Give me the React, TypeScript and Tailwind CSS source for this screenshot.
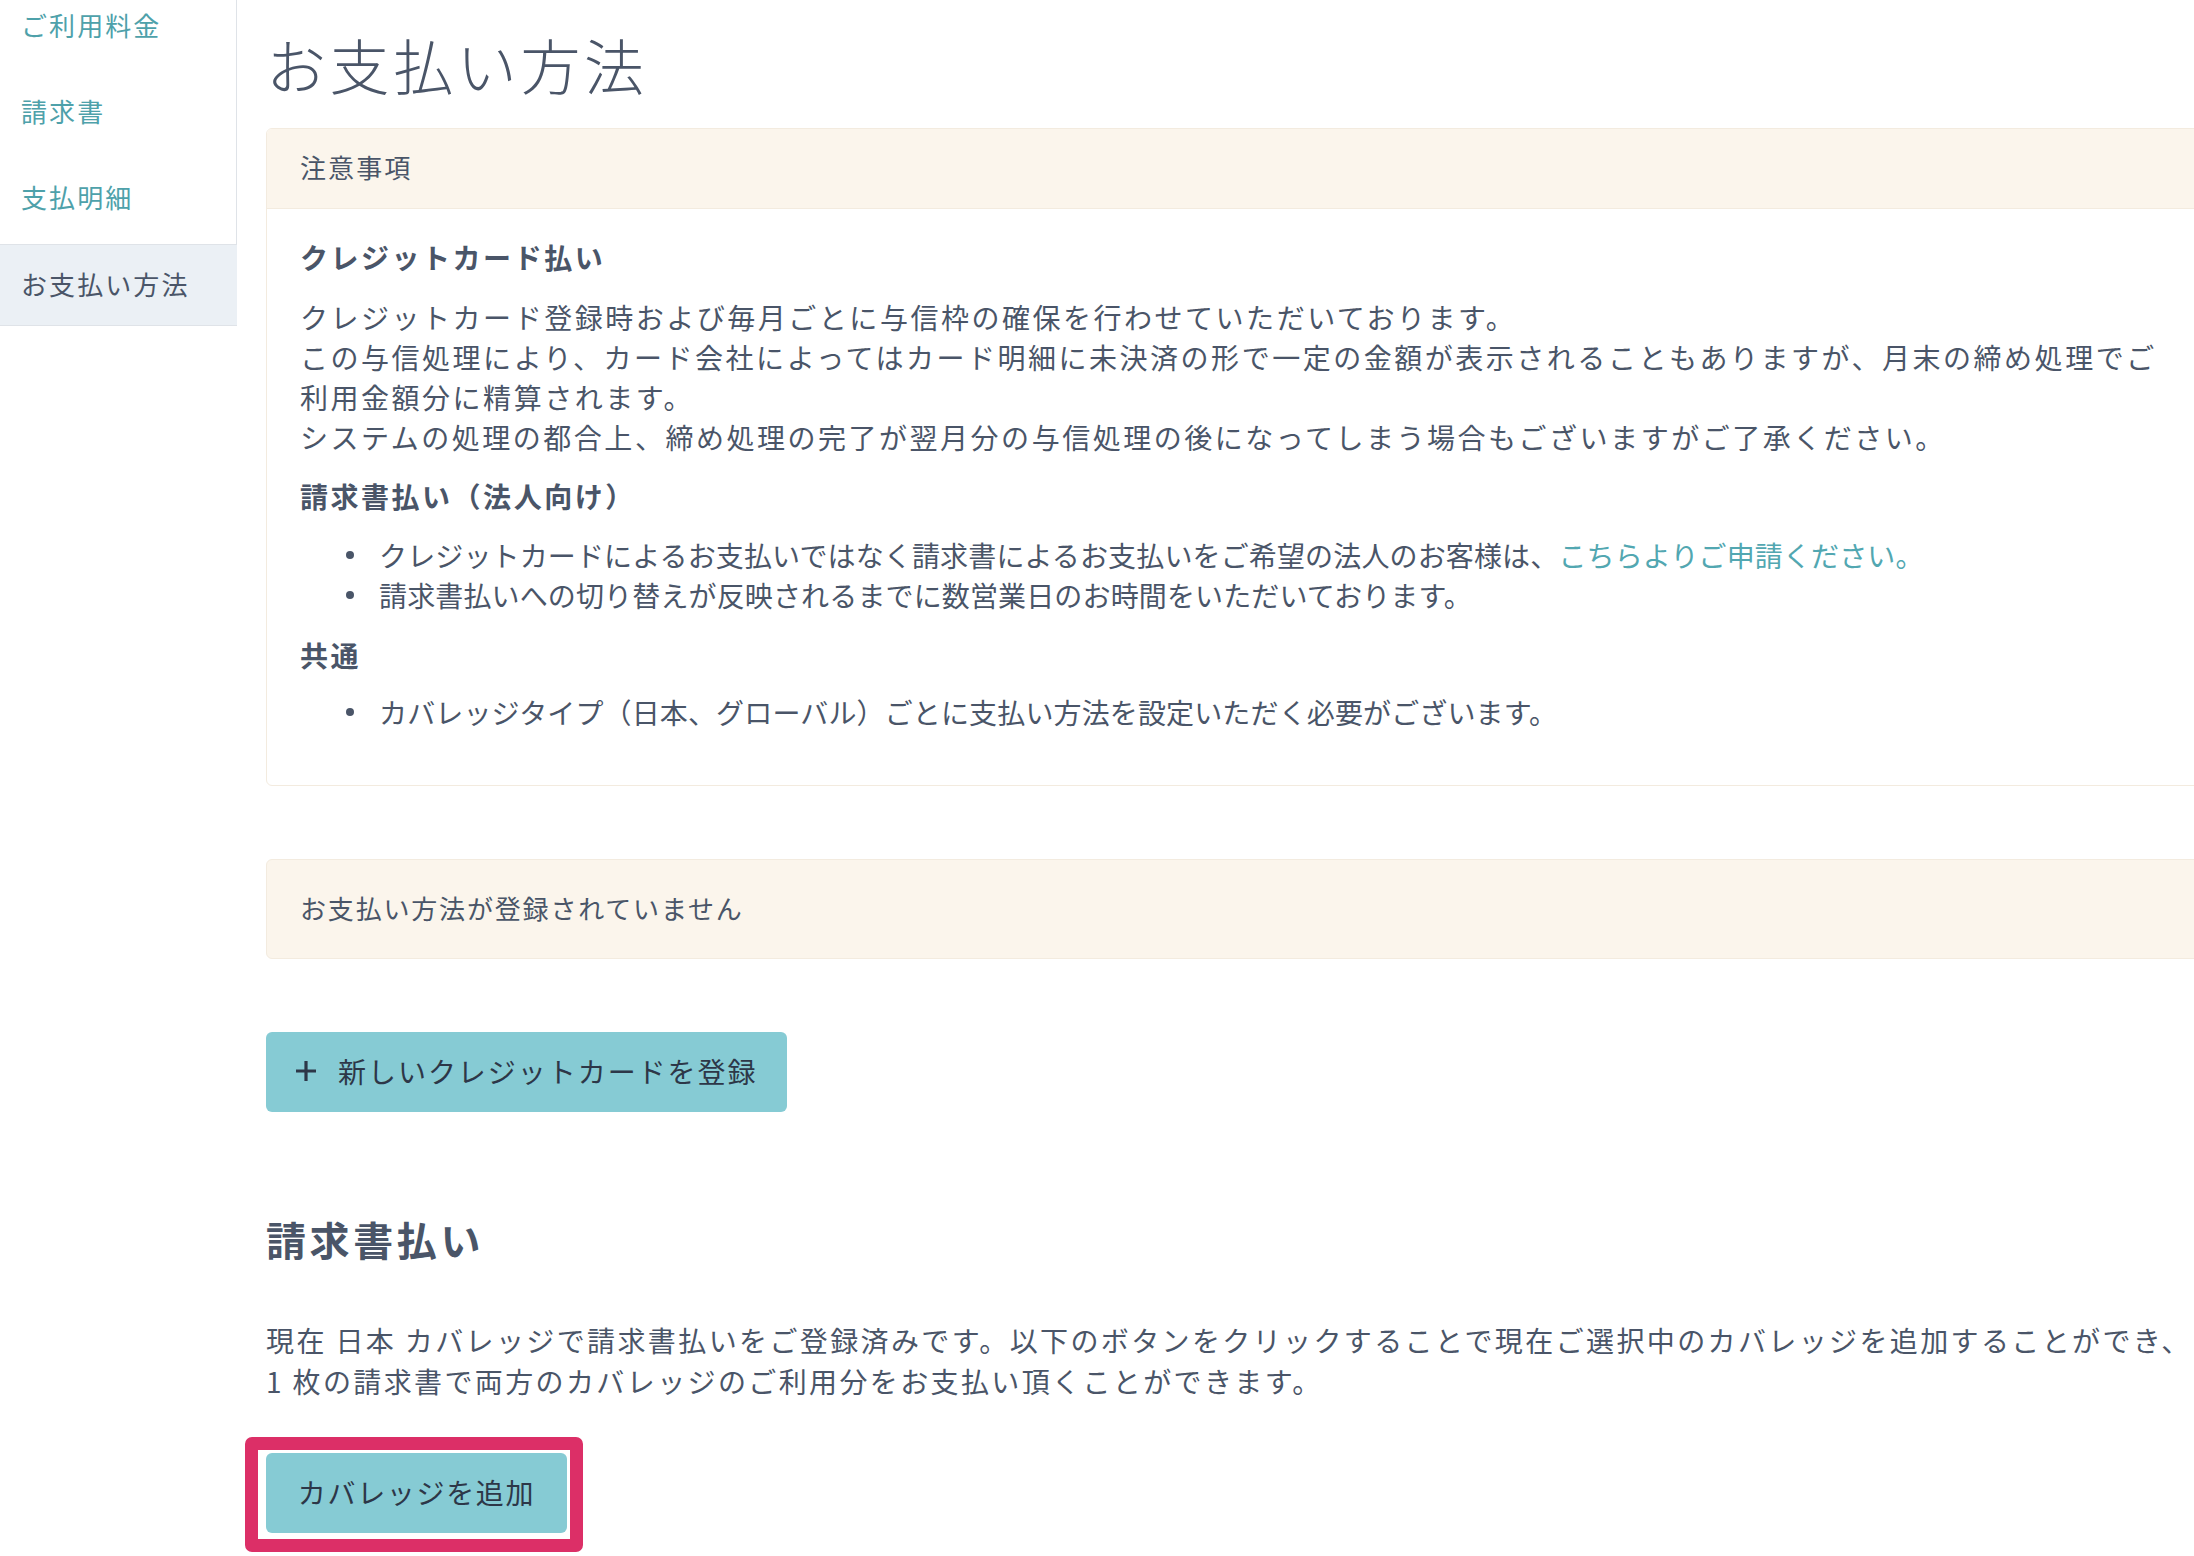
import React from "react";

const FONT = { fontFamily: '"Noto Sans CJK JP", "Noto Sans", sans-serif' };

function Bullet({ children }: { children: React.ReactNode }) {
  return (
    <div className="flex items-center h-[40px] pl-[46px] tracking-[0.005em]">
      <span className="w-[8px] h-[8px] rounded-full bg-[#4a5568] shrink-0" />
      <span className="ml-[25px] whitespace-nowrap">{children}</span>
    </div>
  );
}

export default function App() {
  return (
    <div
      className="flex w-[2194px] h-[1556px] overflow-hidden bg-white text-[#4a5568]"
      style={FONT}
    >
      {/* Sidebar */}
      <aside className="w-[237px] shrink-0 flex flex-col mt-[-19px]">
        <a className="h-[86px] flex items-center px-[21px] border-r border-[#dfe3e8] text-[26px] tracking-[0.08em] text-[#4ea1aa]">
          ご利用料金
        </a>
        <a className="h-[86px] flex items-center px-[21px] border-r border-[#dfe3e8] text-[26px] tracking-[0.08em] text-[#4ea1aa]">
          請求書
        </a>
        <a className="h-[91px] flex items-center px-[21px] pb-[5px] border-r border-[#dfe3e8] text-[26px] tracking-[0.08em] text-[#4ea1aa]">
          支払明細
        </a>
        <a className="h-[82px] flex items-center px-[21px] pb-[3px] border-y border-[#dfe3e8] bg-[#ebf0f5] text-[26px] tracking-[0.08em] text-[#4a5568]">
          お支払い方法
        </a>
      </aside>

      {/* Main */}
      <main className="w-[1980px] shrink-0 pl-[29px] flex flex-col">
        <h1 className="h-[128px] flex items-center text-[60px] font-light tracking-[0.06em] text-[#4a5568] leading-none">
          お支払い方法
        </h1>

        {/* Notes card */}
        <section className="border border-[#f3ebdf] rounded-[6px] overflow-hidden">
          <div className="h-[80px] flex items-center px-[33px] pb-[4px] bg-[#fbf5ec] border-b border-[#f3ebdf] text-[26px] tracking-[0.08em]">
            注意事項
          </div>
          <div className="px-[33px] pt-[28px] pb-[53px] text-[28px] tracking-[0.09em] leading-[40px]">
            <h3 className="font-bold">クレジットカード払い</h3>
            <div className="mt-[20px]">
              <div className="whitespace-nowrap">
                クレジットカード登録時および毎月ごとに与信枠の確保を行わせていただいております。
              </div>
              <div className="whitespace-nowrap">
                この与信処理により、カード会社によってはカード明細に未決済の形で一定の金額が表示されることもありますが、月末の締め処理でご
              </div>
              <div className="whitespace-nowrap">利用金額分に精算されます。</div>
              <div className="whitespace-nowrap">
                システムの処理の都合上、締め処理の完了が翌月分の与信処理の後になってしまう場合もございますがご了承ください。
              </div>
            </div>

            <h3 className="font-bold mt-[19px]">請求書払い（法人向け）</h3>
            <div className="mt-[19px]">
              <Bullet>
                クレジットカードによるお支払いではなく請求書によるお支払いをご希望の法人のお客様は、
                <a className="text-[#52a7b1]">こちらよりご申請ください。</a>
              </Bullet>
              <Bullet>
                請求書払いへの切り替えが反映されるまでに数営業日のお時間をいただいております。
              </Bullet>
            </div>

            <h3 className="font-bold mt-[20px]">共通</h3>
            <div className="mt-[17px]">
              <Bullet>
                カバレッジタイプ（日本、グローバル）ごとに支払い方法を設定いただく必要がございます。
              </Bullet>
            </div>
          </div>
        </section>

        {/* Empty notice */}
        <section className="mt-[73px] h-[100px] flex items-center px-[33px] pb-[4px] bg-[#fbf5ec] border border-[#f3ebdf] rounded-[6px] text-[26px] tracking-[0.07em]">
          お支払い方法が登録されていません
        </section>

        {/* New card button */}
        <div className="mt-[73px]">
          <button className="h-[80px] w-[521px] flex items-center pl-[29px] pb-[2px] bg-[#86cbd4] rounded-[6px] text-[#2d3748] text-[28px] tracking-[0.07em]">
            <svg width="22" height="22" viewBox="0 0 22 22" className="shrink-0">
              <path d="M11 1v20M1 11h20" stroke="#2d3748" strokeWidth="3.2" />
            </svg>
            <span className="ml-[21px]">新しいクレジットカードを登録</span>
          </button>
        </div>

        {/* Invoice payment */}
        <h2 className="mt-[99px] h-[56px] flex items-center text-[40px] font-bold tracking-[0.09em] text-[#4a5568]">
          請求書払い
        </h2>
        <div className="mt-[53px] text-[28px] tracking-[0.085em] leading-[41px]">
          <div className="whitespace-nowrap">
            現在 日本 カバレッジで請求書払いをご登録済みです。以下のボタンをクリックすることで現在ご選択中のカバレッジを追加することができ、
          </div>
          <div className="whitespace-nowrap">
            1 枚の請求書で両方のカバレッジのご利用分をお支払い頂くことができます。
          </div>
        </div>

        <div className="mt-[51px]">
          <div className="relative inline-block">
            <button className="h-[80px] w-[301px] flex items-center justify-center pb-[2px] bg-[#86cbd4] rounded-[6px] text-[#2d3748] text-[28px] tracking-[0.06em]">
              カバレッジを追加
            </button>
            <div className="absolute left-[-21px] top-[-16px] right-[-16px] bottom-[-19px] border-[13px] border-[#dc2f67] rounded-[7px] pointer-events-none" />
          </div>
        </div>
      </main>
    </div>
  );
}
